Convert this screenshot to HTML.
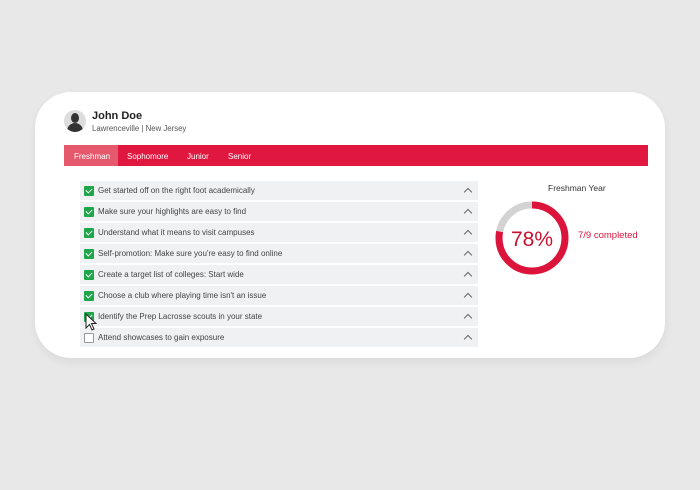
<!DOCTYPE html>
<html><head><style>
*{margin:0;padding:0;box-sizing:border-box}
body{width:700px;height:490px;background:#e8e8e8;font-family:"Liberation Sans",sans-serif;position:relative;overflow:hidden}
.card{position:absolute;left:35px;top:92px;width:630px;height:266px;background:#fff;border-radius:36px;box-shadow:0 4px 10px rgba(0,0,0,.06)}
.av{position:absolute;left:64px;top:110px;width:22px;height:22px;border-radius:50%;background:#ddd;overflow:hidden}
.av:before{content:"";position:absolute;left:7px;top:3px;width:8px;height:10px;border-radius:50%;background:#333}
.av:after{content:"";position:absolute;left:3px;top:13px;width:16px;height:12px;border-radius:8px 8px 0 0;background:#333}
.name{position:absolute;left:92px;top:110px;font-size:11px;font-weight:bold;color:#222}
.loc{position:absolute;left:92px;top:124px;font-size:7.8px;color:#555}
.tabs{position:absolute;left:64px;top:145px;width:584px;height:21px;background:#e0173f;font-size:8px;color:#fff}
.tabs span{position:absolute;top:6.5px}
.tab1{position:absolute;left:0;top:0;width:54px;height:21px;background:#e6596d}
.row{position:absolute;left:80px;width:398px;height:19px;background:#f0f1f3;font-size:8px;color:#444;line-height:19px;padding-left:18px}
.cb{position:absolute;left:4px;top:5px;width:10px;height:10px;background:#1fa64a;border-radius:1px}
.cb:after{content:"";position:absolute;left:3px;top:1px;width:3px;height:5px;border:solid #fff;border-width:0 1.3px 1.3px 0;transform:rotate(45deg)}
.cb.off{background:#fff;border:1px solid #999}
.cb.off:after{display:none}
.chev{position:absolute;right:7px;top:8px;width:6px;height:6px;border:solid #666;border-width:1px 0 0 1px;transform:rotate(45deg)}
</style></head><body>
<div class="card"></div>
<div class="av"></div>
<div class="name">John Doe</div>
<div class="loc">Lawrenceville | New Jersey</div>
<div class="tabs"><div class="tab1"></div><span style="left:10px">Freshman</span><span style="left:63px">Sophomore</span><span style="left:123px">Junior</span><span style="left:164px">Senior</span></div>
<div class="row" style="top:181px"><div class="cb"></div>Get started off on the right foot academically<div class="chev"></div></div>
<div class="row" style="top:202px"><div class="cb"></div>Make sure your highlights are easy to find<div class="chev"></div></div>
<div class="row" style="top:223px"><div class="cb"></div>Understand what it means to visit campuses<div class="chev"></div></div>
<div class="row" style="top:244px"><div class="cb"></div>Self-promotion: Make sure you're easy to find online<div class="chev"></div></div>
<div class="row" style="top:265px"><div class="cb"></div>Create a target list of colleges: Start wide<div class="chev"></div></div>
<div class="row" style="top:286px"><div class="cb"></div>Choose a club where playing time isn't an issue<div class="chev"></div></div>
<div class="row" style="top:307px"><div class="cb"></div>Identify the Prep Lacrosse scouts in your state<div class="chev"></div></div>
<div class="row" style="top:328px"><div class="cb off"></div>Attend showcases to gain exposure<div class="chev"></div></div>
<svg style="position:absolute;left:85px;top:313px" width="14" height="20" viewBox="0 0 14 20"><path d="M1 1 L1 15 L4.5 11.5 L7 17 L9 16 L6.5 10.5 L11 10.5 Z" fill="#fff" stroke="#222" stroke-width="1"/></svg>
<div style="position:absolute;left:548px;top:183px;font-size:8.5px;color:#333">Freshman Year</div>
<svg style="position:absolute;left:494px;top:200px" width="76" height="76" viewBox="0 0 76 76">
<circle cx="38" cy="38" r="33" fill="none" stroke="#d3d3d3" stroke-width="7"/>
<circle cx="38" cy="38" r="33" fill="none" stroke="#dc143c" stroke-width="7" stroke-dasharray="161.7 300" transform="rotate(-90 38 38)"/>
<text x="38" y="46" text-anchor="middle" font-family="Liberation Sans" font-size="21" fill="#c8102e">78%</text>
</svg>
<div style="position:absolute;left:578px;top:230px;font-size:9.5px;color:#dc143c">7/9 completed</div>
</body></html>
